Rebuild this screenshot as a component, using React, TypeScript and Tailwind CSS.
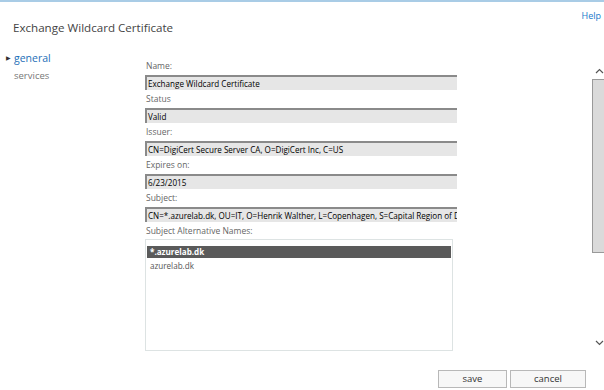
import React from 'react';

const font = { fontFamily: '"Open Sans", "Noto Sans", sans-serif' };

interface FieldProps {
  label: string;
  value: string;
}

const Field: React.FC<FieldProps> = ({ label, value }) => (
  <div className="flex flex-col">
    <div className="h-[13px] pl-px text-[8.5px] leading-[13px] text-[#666]">{label}</div>
    <div className="mt-[3px] h-[15px] overflow-hidden whitespace-nowrap border-l-2 border-t-2 border-l-[#8a8a8a] border-t-[#8a8a8a] bg-[#e6e6e6] pl-[1px] text-[8.1px] leading-[13px] text-black">
      {value}
    </div>
  </div>
);

const fields: FieldProps[] = [
  { label: 'Name:', value: 'Exchange Wildcard Certificate' },
  { label: 'Status', value: 'Valid' },
  { label: 'Issuer:', value: 'CN=DigiCert Secure Server CA, O=DigiCert Inc, C=US' },
  { label: 'Expires on:', value: '6/23/2015' },
  {
    label: 'Subject:',
    value: 'CN=*.azurelab.dk, OU=IT, O=Henrik Walther, L=Copenhagen, S=Capital Region of Denmark, C=DK',
  },
];

export default function App() {
  return (
    <div className="relative flex h-[390px] w-[604px] flex-col overflow-hidden border-t-2 border-[#a9cce6] bg-white" style={font}>
      <div className="flex items-start justify-between">
        <h1 className="pl-[13px] pt-[18px] text-[11.6px] leading-[16px] text-[#444]">
          Exchange Wildcard Certificate
        </h1>
        <a className="pr-[3px] pt-[8px] text-[9px] leading-[12px] text-[#1a7acb]">Help</a>
      </div>

      <div className="flex flex-1">
        <nav className="flex w-[145px] flex-col pl-[6px] pt-[14px]">
          <div className="flex items-center gap-[3px] text-[10.5px] leading-[17px] text-[#1e6fb8]">
            <span className="text-[6px] text-[#333]">▶</span>
            general
          </div>
          <div className="pl-[8px] text-[9.5px] leading-[17px] text-[#777]">services</div>
        </nav>

        <div className="flex w-[312px] flex-col gap-[2px] pt-[23px]">
          {fields.map((f) => (
            <Field key={f.label} {...f} />
          ))}
          <div className="h-[13px] pl-px text-[8.5px] leading-[13px] text-[#666]">Subject Alternative Names:</div>
          <div className="h-[112px] w-[308px] border border-[#dde3e3] px-px pt-[6px]">
            <div className="h-[12px] bg-[#5a5a5a] pl-[3px] text-[8.1px] font-bold leading-[12px] text-white">*.azurelab.dk</div>
            <div className="mt-[2px] pl-[3px] text-[8.1px] leading-[12px] text-[#555]">azurelab.dk</div>
          </div>
        </div>

        <div className="ml-auto flex w-[12px] flex-col items-center pt-[32px]">
          <svg width="9" height="6" viewBox="0 0 9 6" className="ml-[2px]">
            <path d="M1 5 L4.5 1.5 L8 5" fill="none" stroke="#555" strokeWidth="1.2" />
          </svg>
          <div className="mt-[5px] h-[174px] w-full border border-r-0 border-[#999] bg-[#dadada]" />
          <div className="flex-1" />
          <svg width="9" height="6" viewBox="0 0 9 6" className="mb-[44px] ml-[2px]">
            <path d="M1 1 L4.5 4.5 L8 1" fill="none" stroke="#555" strokeWidth="1.2" />
          </svg>
        </div>
      </div>

      <div className="absolute bottom-[2px] right-[18px] flex gap-[3px]">
        <button className="h-[18px] w-[69px] border border-[#b8b8b8] bg-[#f7f7f7] text-[9.5px] leading-[16px] text-[#333]">save</button>
        <button className="h-[18px] w-[76px] border border-[#b8b8b8] bg-[#f7f7f7] text-[9.5px] leading-[16px] text-[#333]">cancel</button>
      </div>
    </div>
  );
}
